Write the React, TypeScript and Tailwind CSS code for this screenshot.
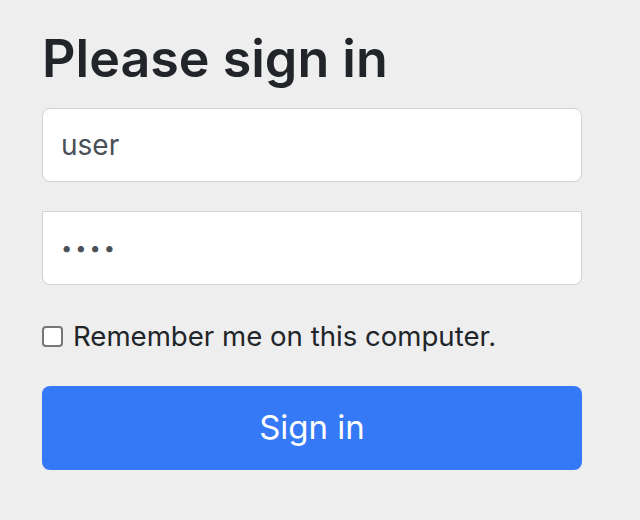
import React from "react";

export default function App() {
  return (
    <div className="min-h-[520px] w-[640px] bg-[#eeeeee] font-['Inter',sans-serif] text-[#212529]">
      <form className="flex w-[582px] flex-col pl-[42px] pt-[28px]" onSubmit={(e) => e.preventDefault()}>
        <h2 className="m-0 text-[52px] leading-[62px] font-semibold">Please sign in</h2>
        <input
          type="text"
          defaultValue="user"
          className="mt-[18px] h-[74px] w-[540px] rounded-[8px] border border-[#ced4da] bg-white px-[18px] text-[28px] text-[#495057] outline-none"
        />
        <input
          type="password"
          defaultValue="pass"
          className="mt-[29px] h-[74px] w-[540px] rounded-b-[8px] border border-[#ced4da] bg-white px-[18px] text-[20px] tracking-[3px] text-[#495057] outline-none"
        />
        <label className="mt-[34px] flex items-center gap-[10px] text-[27.6px] leading-[34px]">
          <span className="box-border inline-block h-[21px] w-[21px] rounded-[4px] border-2 border-[#767676] bg-white" />
          <span>Remember me on this computer.</span>
        </label>
        <button
          type="submit"
          className="mt-[33px] h-[84px] w-[540px] rounded-[8px] bg-[#3579f6] text-[33px] text-white"
        >
          Sign in
        </button>
      </form>
    </div>
  );
}
